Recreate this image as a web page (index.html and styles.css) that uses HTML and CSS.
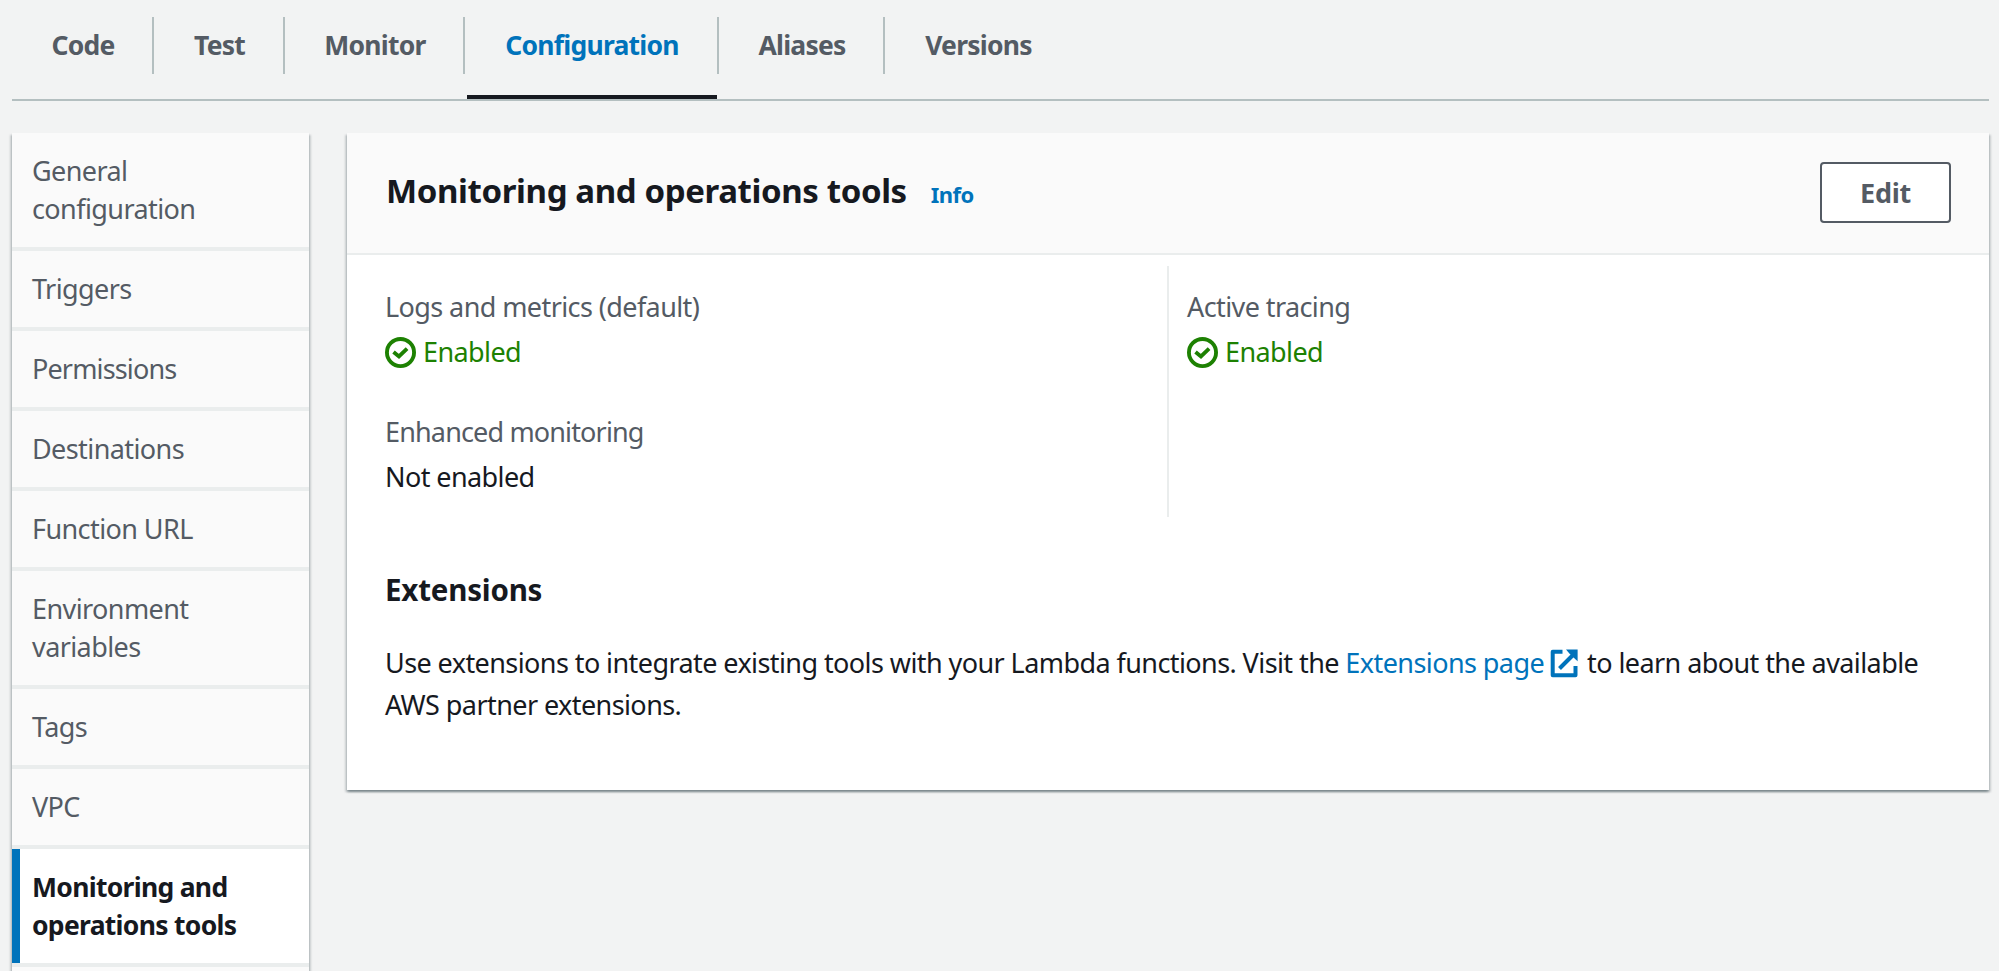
FILE: index.html
```html
<!DOCTYPE html>
<html lang="en">
<head>
<meta charset="utf-8">
<title>Monitoring and operations tools</title>
<link rel="stylesheet" href="styles.css">
</head>
<body>
<nav class="tabs">
  <a class="tab tab-code">Code</a>
  <a class="tab tab-test">Test</a>
  <a class="tab tab-monitor">Monitor</a>
  <a class="tab tab-config active">Configuration</a>
  <a class="tab tab-aliases">Aliases</a>
  <a class="tab tab-versions">Versions</a>
</nav>
<div class="layout">
  <aside class="sidebar">
    <a class="item">General<br>configuration</a>
    <a class="item">Triggers</a>
    <a class="item tight">Permissions</a>
    <a class="item">Destinations</a>
    <a class="item">Function URL</a>
    <a class="item">Environment<br>variables</a>
    <a class="item">Tags</a>
    <a class="item">VPC</a>
    <a class="item selected">Monitoring and<br>operations tools</a>
    <a class="item next"></a>
  </aside>
  <main class="panel">
    <header class="panel-header">
      <div class="heading">
        <h2 class="title">Monitoring and operations tools</h2>
        <a class="info">Info</a>
      </div>
      <button class="edit">Edit</button>
    </header>
    <section class="columns">
      <div class="column">
        <div class="field">
          <div class="label">Logs and metrics (default)</div>
          <div class="value ok">
            <svg class="check" viewBox="0 0 16 16"><circle cx="8" cy="8" r="7"/><path d="M4.4 7.7l2.8 2.3 4.2-4"/></svg>
            <span>Enabled</span>
          </div>
        </div>
        <div class="field">
          <div class="label tight">Enhanced monitoring</div>
          <div class="value">Not enabled</div>
        </div>
      </div>
      <div class="column divided">
        <div class="field">
          <div class="label">Active tracing</div>
          <div class="value ok">
            <svg class="check" viewBox="0 0 16 16"><circle cx="8" cy="8" r="7"/><path d="M4.4 7.7l2.8 2.3 4.2-4"/></svg>
            <span>Enabled</span>
          </div>
        </div>
      </div>
    </section>
    <section class="extensions">
      <h3 class="subtitle">Extensions</h3>
      <p class="text">Use extensions to integrate existing tools with your Lambda functions. Visit the <a class="link">Extensions page<svg class="external" viewBox="0 0 31 31"><path d="M13.5 3.7H3.7v23.6h22.8V18"/><path d="M10.5 20.5L25 6"/><path class="head" d="M17 1.6h11.6v11.6l-3.8-3.4-4.4-4.4z"/></svg></a>to learn about the available<br>AWS partner extensions.</p>
    </section>
  </main>
</div>
</body>
</html>
```
FILE: styles.css
```css
* { box-sizing: border-box; }
body {
  margin: 0;
  padding: 17px 10px 0 12px;
  height: 971px;
  overflow: hidden;
  background: #f2f3f3;
  color: #16191f;
  font-family: "Noto Sans", sans-serif;
  font-size: 27px;
  letter-spacing: -0.59px;
}
.tabs {
  display: flex;
  height: 84px;
  border-bottom: 2px solid #b4bfc0;
}
.tab {
  height: 57px;
  padding-left: 2px;
  border-right: 2px solid #b4bfc0;
  color: #545b64;
  font-size: 26.5px;
  font-weight: 700;
  letter-spacing: -0.75px;
  line-height: 57px;
  text-align: center;
}
.tab-code { width: 142px; }
.tab-test { width: 131px; }
.tab-monitor { width: 180px; }
.tab-config { width: 254px; }
.tab-aliases { width: 166px; }
.tab-versions { width: 185px; border-right: 0; }
.tab.active { position: relative; color: #0073bb; }
.tab.active::after {
  content: "";
  position: absolute;
  top: 78px;
  left: 2px;
  width: 250px;
  height: 4px;
  background: #16191f;
}
.layout {
  display: flex;
  align-items: flex-start;
  gap: 38px;
  padding-top: 32px;
}
.sidebar, .panel {
  box-shadow: 0 2px 2px rgba(0, 28, 36, .3), 2px 2px 2px rgba(0, 28, 36, .15), -2px 2px 2px rgba(0, 28, 36, .15);
}
.sidebar {
  width: 297px;
  flex: none;
  background: #fafafa;
}
.item {
  display: flex;
  align-items: center;
  height: 80px;
  padding: 0 20px;
  border-bottom: 4px solid #eaeded;
  color: #545b64;
  line-height: 38px;
}
.item:has(br) { height: 118px; }
.item.selected {
  padding-left: 12px;
  border-left: 8px solid #0073bb;
  border-bottom: 0;
  background: #fff;
  color: #16191f;
  font-size: 26.5px;
  font-weight: 700;
  letter-spacing: -0.7px;
  height: 114px;
}
.item.next { height: 8px; padding: 0; border-top: 4px solid #eaeded; border-bottom: 0; }
.tight { letter-spacing: -0.85px; }
.panel {
  flex: 1;
  height: 657px;
  background: #fff;
}
.panel-header {
  display: flex;
  align-items: center;
  justify-content: space-between;
  height: 122px;
  padding: 0 38px 1px 39px;
  border-bottom: 2px solid #eaeded;
  background: #fafafa;
}
.heading { display: flex; align-items: baseline; gap: 24px; margin-top: -4px; }
.title {
  margin: 0;
  font-size: 33px;
  letter-spacing: -0.38px;
  line-height: 44px;
}
.info { color: #0073bb; font-size: 22px; font-weight: 700; }
.edit {
  width: 131px;
  height: 61px;
  padding: 0 0 1px;
  border: 2px solid #545b64;
  border-radius: 4px;
  background: #fff;
  color: #545b64;
  font: 700 27px "Noto Sans", sans-serif;
  letter-spacing: -0.3px;
}
.columns {
  display: flex;
  height: 251px;
  margin-top: 11px;
}
.column { width: 820px; padding: 20px 0 0 38px; }
.divided { border-left: 2px solid #eaeded; padding-left: 18px; }
.field { height: 125px; }
.label { color: #545b64; line-height: 42px; }
.value { line-height: 42px; margin-top: 3px; }
.ok { display: flex; align-items: center; gap: 7px; color: #1d8102; }
.check { width: 31px; height: 31px; fill: none; stroke: #1d8102; stroke-width: 2; }
.extensions { padding: 51px 38px 0; }
.subtitle {
  margin: 0;
  font-size: 29.5px;
  letter-spacing: -0.2px;
  line-height: 44px;
}
.text { margin: 30px 0 0; line-height: 42px; letter-spacing: -0.58px; white-space: nowrap; }
.link { color: #0073bb; }
.external {
  width: 31px;
  height: 31px;
  margin: 0 7px 0 5px;
  vertical-align: -6px;
  fill: none;
  stroke: #0073bb;
  stroke-width: 4;
  stroke-linejoin: round;
}
.external .head { fill: #0073bb; stroke: none; }
```
